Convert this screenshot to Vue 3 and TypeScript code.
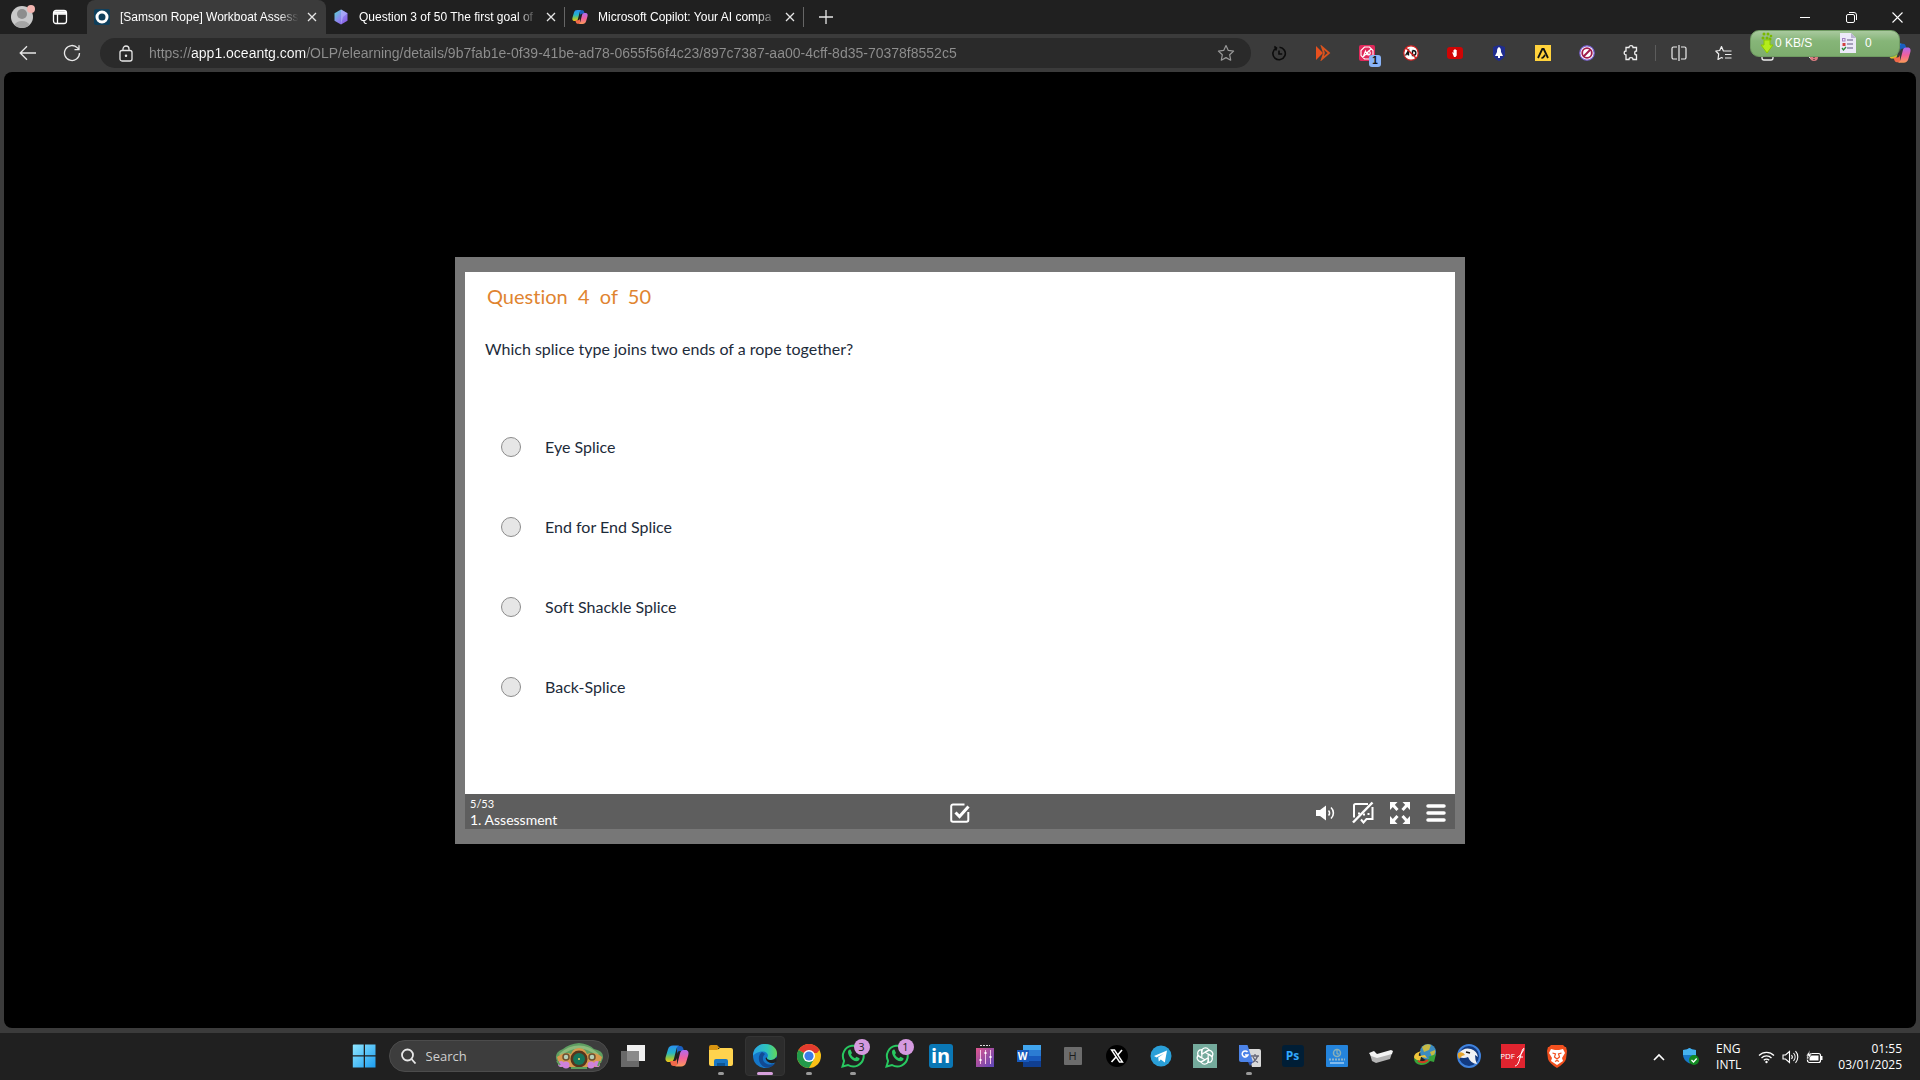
<script setup lang="ts">
import { ref } from 'vue'

const url = ref(
  'https://app1.oceantg.com/OLP/elearning/details/9b7fab1e-0f39-41be-ad78-0655f56f4c23/897c7387-aa00-4cff-8d35-70378f8552c5',
)
const query = ref('')

const tabs = [
  { id: 'samson', title: '[Samson Rope] Workboat Assessm' },
  { id: 'question', title: 'Question 3 of 50 The first goal of' },
  { id: 'copilot', title: 'Microsoft Copilot: Your AI compa' },
]
const activeTab = ref('samson')

const extensions = ['History', 'Speed', 'Ad stopper', 'Ad block', 'Hand', 'Bell', 'Amplify', 'Blocker', 'Extensions']

const answers = ['Eye Splice', 'End for End Splice', 'Soft Shackle Splice', 'Back-Splice']
const picked = ref<string | null>(null)

interface TaskApp {
  name: string
  state?: 'open' | 'active'
  badge?: string
}
const apps: TaskApp[] = [
  { name: 'Task view' },
  { name: 'Copilot' },
  { name: 'File Explorer', state: 'open' },
  { name: 'Edge', state: 'active' },
  { name: 'Chrome', state: 'open' },
  { name: 'WhatsApp', state: 'open', badge: '3' },
  { name: 'WhatsApp Business', badge: '1' },
  { name: 'LinkedIn' },
  { name: 'Mixer' },
  { name: 'Word' },
  { name: 'H' },
  { name: 'X' },
  { name: 'Telegram' },
  { name: 'ChatGPT' },
  { name: 'Translate', state: 'open' },
  { name: 'Photoshop' },
  { name: 'Library' },
  { name: 'Device' },
  { name: 'Download Manager' },
  { name: 'Eagle' },
  { name: 'PDF' },
  { name: 'Brave' },
]
</script>

<template>
  <div class="screen">
    <svg class="defs" width="0" height="0" aria-hidden="true">
      <defs>
        <linearGradient id="cp-a" x1="0" y1="0" x2="0" y2="1">
          <stop offset="0" stop-color="#2a8ff0" />
          <stop offset=".45" stop-color="#25b5c8" />
          <stop offset=".75" stop-color="#8fc743" />
          <stop offset="1" stop-color="#f5c518" />
        </linearGradient>
        <linearGradient id="cp-b" x1="0" y1="0" x2="0" y2="1">
          <stop offset="0" stop-color="#b06af0" />
          <stop offset=".5" stop-color="#f0609c" />
          <stop offset="1" stop-color="#fb9a58" />
        </linearGradient>
        <linearGradient id="win" x1="0" y1="0" x2="1" y2="1">
          <stop offset="0" stop-color="#8fe6ff" />
          <stop offset="1" stop-color="#1b9df0" />
        </linearGradient>
        <linearGradient id="edge-a" x1="0" y1="0" x2="1" y2="0">
          <stop offset="0" stop-color="#2aa5e8" />
          <stop offset=".6" stop-color="#2fc6b8" />
          <stop offset="1" stop-color="#63d857" />
        </linearGradient>
        <linearGradient id="mix" x1="0" y1="0" x2="1" y2="1">
          <stop offset="0" stop-color="#e0568e" />
          <stop offset="1" stop-color="#5a46b8" />
        </linearGradient>
        <linearGradient id="hex" x1="0" y1="0" x2="1" y2="1">
          <stop offset="0" stop-color="#55d8cf" />
          <stop offset=".5" stop-color="#8c88f0" />
          <stop offset="1" stop-color="#8a4fe0" />
        </linearGradient>
        <symbol id="copilot" viewBox="0 0 24 24">
          <path fill="#1a5fc0" d="M12 2h3.500c1.500 0 2.300 1 2.700 2.300L19 7h-4c-2 0-2.500 1-3 3z" />
          <path fill="url(#cp-a)" d="M8 1.500h6.500c-1.800.3-2.500 1.500-3 3.300L9 14.500c-.6 2.300-1.500 3.500-3.700 3.500H3.500C.8 18 0 15.600.7 13L3 5.200C3.800 2.700 5.300 1.500 8 1.500z" />
          <path fill="#f26a4a" d="M12 22H8.500c-1.500 0-2.300-1-2.700-2.300L5 17h4c2 0 2.500-1 3-3z" />
          <path fill="url(#cp-b)" d="M16 22.500H9.500c1.800-.3 2.500-1.500 3-3.300L15 9.500C15.600 7.200 16.500 6 18.700 6h1.800c2.700 0 3.500 2.400 2.800 5L21 18.800c-.8 2.500-2.300 3.700-5 3.700z" />
        </symbol>
      </defs>
    </svg>

    <header class="tabstrip">
      <button class="profile" aria-label="Profile">
        <svg width="26" height="26" viewBox="0 0 26 26">
          <circle cx="13" cy="14" r="11" fill="#c9c9c9" />
          <circle cx="13" cy="11" r="5" fill="#8d8d8d" />
          <path d="M5.500 22a8 6 0 0 1 15 0 11 11 0 0 1-15 0z" fill="#a5a5a5" />
          <circle cx="22" cy="6" r="4" fill="#f3b5b0" />
        </svg>
      </button>
      <button class="workspaces" aria-label="Tab actions">
        <svg width="16" height="16" viewBox="0 0 16 16" fill="none" stroke="#fff" stroke-width="1.300">
          <rect x="1.500" y="1.500" width="13" height="13" rx="2.500" />
          <path d="M1.500 5h13M5.500 5v9.500" /><path d="M2 3.500h12" stroke-width="2.500" />
        </svg>
      </button>
      <nav class="tabs" role="tablist" aria-label="Tabs">
        <div v-for="t in tabs" :key="t.id" class="tab" :class="{ active: t.id === activeTab }">
          <button class="tab-main" role="tab" :aria-selected="t.id === activeTab" @click="activeTab = t.id">
            <svg v-if="t.id === 'samson'" width="16" height="16" viewBox="0 0 16 16">
              <rect width="16" height="16" rx="2" fill="#0f3f5c" />
              <circle cx="8" cy="8" r="5" fill="none" stroke="#fff" stroke-width="3" />
            </svg>
            <svg v-else-if="t.id === 'question'" width="16" height="16" viewBox="0 0 16 16">
              <path d="M8 .5l6.500 3.800v7.400L8 15.500 1.500 11.700V4.300z" fill="url(#hex)" />
              <path d="M8 .5l6.500 3.800L10 8 8 15.500z" fill="#b9b6ff" opacity=".6" />
            </svg>
            <svg v-else width="16" height="16"><use href="#copilot" /></svg>
            <span class="tab-title">{{ t.title }}</span>
          </button>
          <button class="tab-close" :aria-label="'Close ' + t.title">
            <svg width="10" height="10" viewBox="0 0 10 10" stroke="#e6e6e6" stroke-width="1.300"><path d="M1 1l8 8M9 1l-8 8" /></svg>
          </button>
        </div>
      </nav>
      <button class="new-tab" aria-label="New tab">
        <svg width="16" height="16" viewBox="0 0 16 16" stroke="#e6e6e6" stroke-width="1.300"><path d="M8 1v14M1 8h14" /></svg>
      </button>
      <div class="window-controls">
        <button aria-label="Minimise"><svg width="10" height="10" viewBox="0 0 10 10" stroke="#fff"><path d="M0 5.500h10" /></svg></button>
        <button aria-label="Restore">
          <svg width="11" height="11" viewBox="0 0 11 11" fill="none" stroke="#fff"><rect x=".5" y="2.500" width="8" height="8" rx="1.500" /><path d="M3 .5h5a2.500 2.500 0 0 1 2.500 2.500v5" /></svg>
        </button>
        <button aria-label="Close window"><svg width="11" height="11" viewBox="0 0 11 11" stroke="#fff" stroke-width="1.100"><path d="M.5.5l10 10M10.500.5l-10 10" /></svg></button>
      </div>
    </header>

    <div class="toolbar">
      <button class="nav-button" aria-label="Back">
        <svg width="18" height="16" viewBox="0 0 18 16" fill="none" stroke="#e8e8e8" stroke-width="1.300"><path d="M17 8H1.500M8 1.200L1.200 8 8 14.800" /></svg>
      </button>
      <button class="nav-button" aria-label="Refresh">
        <svg width="18" height="18" viewBox="0 0 18 18" fill="none" stroke="#e8e8e8" stroke-width="1.300"><path d="M16.500 9A7.500 7.500 0 1 1 14.500 3.900L16 5.500M16 1.200v4.500h-4.500" /></svg>
      </button>
      <div class="address">
        <button class="lock" aria-label="Site information">
          <svg width="14" height="17" viewBox="0 0 14 17" fill="none" stroke="#e8e8e8" stroke-width="1.300"><rect x="1" y="5.500" width="12" height="10.500" rx="2" /><path d="M4 5.500V4a3 3 0 0 1 6 0v1.500" /><circle cx="7" cy="10.800" r=".6" fill="#e8e8e8" /></svg>
        </button>
        <input v-model="url" class="url" type="text" aria-label="Address" spellcheck="false" />
        <button class="star" aria-label="Favourite">
          <svg width="18" height="18" viewBox="0 0 18 18" fill="none" stroke="#999" stroke-width="1.200" stroke-linejoin="round"><path d="M9 1.500l2.300 4.900 5.300.7-3.900 3.700 1 5.400L9 13.600l-4.700 2.600 1-5.400L1.400 7.100l5.300-.7z" /></svg>
        </button>
      </div>
      <div class="extensions">
        <button v-for="(e, i) in extensions" :key="e" class="tool" :aria-label="e">
          <svg v-if="i === 0" width="16" height="16" viewBox="0 0 16 16" fill="none" stroke="#0c0c0c" stroke-width="1.600"><path d="M5.200 3A6.200 6.200 0 1 0 8.500 2.300M3.300 1.500L5.500 3l-.8 2.600" /><path d="M8 5.500V9h3.200" /></svg>
          <svg v-else-if="i === 1" width="16" height="16" viewBox="0 0 16 16"><path d="M1 1l7 7-7 7z" fill="#e8501e" /><path d="M7 2l7 6-7 6 2-6z" fill="none" stroke="#d9531e" stroke-width="1.800" /></svg>
          <span v-else-if="i === 2" class="badge-holder">
            <svg width="16" height="16" viewBox="0 0 16 16"><rect width="16" height="16" rx="2" fill="#e0285a" /><path d="M5.500 2h5L14 5.500v5L10.500 14h-5L2 10.500v-5zM3.500 12.500l9-9M4.500 11l2-5 1.500 4M9 6v4c3 0 3-4 0-4" fill="none" stroke="#fff" stroke-width="1.100" /></svg>
            <b class="count">1</b>
          </span>
          <svg v-else-if="i === 3" width="16" height="16" viewBox="0 0 16 16"><circle cx="8" cy="8" r="7.200" fill="#fff" stroke="#d42020" stroke-width="1.200" /><path d="M2.500 10.500L5.500 5.500V10.500M4 9h2M9.500 5.500v5c4.500 0 4.500-5 0-5" fill="none" stroke="#111" stroke-width="1.400" /><path d="M3 3l10 10" stroke="#d42020" stroke-width="1.500" /></svg>
          <svg v-else-if="i === 4" width="16" height="16" viewBox="0 0 16 16"><rect x="0" y="2" width="16" height="12" rx="3" fill="#d00505" /><path d="M5 7l1.500 1V5h1V4h1v1h1.200v5.500L8.500 12H7z" fill="#fff" /></svg>
          <svg v-else-if="i === 5" width="16" height="16" viewBox="0 0 16 16"><path d="M8 0l6 2v7c0 3-3 5.500-6 7-3-1.500-6-4-6-7V2z" fill="#1f2c8f" /><path d="M8 2c2 1 2 3 2 5l2 4H4l2-4c0-2 0-4 2-5zM7 11h2v2H7z" fill="#fff" /></svg>
          <svg v-else-if="i === 6" width="16" height="16" viewBox="0 0 16 16"><rect width="16" height="16" fill="#ffd23c" /><path d="M3 13L7.300 4h1.400L13 13M6.500 13c2.500 0 2.500-2 3.500-3" fill="none" stroke="#111" stroke-width="1.800" /></svg>
          <svg v-else-if="i === 7" width="16" height="16" viewBox="0 0 16 16"><circle cx="8" cy="8" r="7.200" fill="#fff" stroke="#7d63d8" stroke-width="1.200" /><circle cx="8" cy="8" r="4.800" fill="#fff" stroke="#a01c4c" stroke-width="1.800" /><path d="M4.500 11.500l7-7" stroke="#a01c4c" stroke-width="2" /></svg>
          <svg v-else width="16" height="16" viewBox="0 0 16 16" fill="none" stroke="#eee" stroke-width="1.300"><path d="M3 2.500h3a2 1.800 0 1 1 4 0h3.500V6a1.800 2 0 1 0 0 4v4.500H10a2 1.800 0 1 0-4 0H3V10a1.800 2 0 1 1 0-4z" /></svg>
        </button>
        <span class="divider"></span>
        <button class="tool" aria-label="Split screen">
          <svg width="16" height="16" viewBox="0 0 16 16" fill="none" stroke="#eee" stroke-width="1.200"><path d="M8 0v16M6 2H2.500A1.500 1.500 0 0 0 1 3.500v9A1.500 1.500 0 0 0 2.500 14H6M10 2h3.500A1.500 1.500 0 0 1 15 3.500v9a1.500 1.500 0 0 1-1.500 1.500H10" /></svg>
        </button>
        <button class="tool" aria-label="Favourites">
          <svg width="17" height="17" viewBox="0 0 17 17" fill="none" stroke="#eee" stroke-width="1.200" stroke-linejoin="round"><path d="M10 6L8.300 5.800 6.500 1.500 4.700 5.500.8 6l2.900 3L3 14.500l3.500-2 1.500.8M10 6h6.500M10 9.500h6.500M10 13h6.500" /></svg>
        </button>
        <button class="tool" aria-label="Collections">
          <svg width="16" height="16" viewBox="0 0 16 16" fill="none" stroke="#eee" stroke-width="1.300"><rect x="3" y="3" width="11" height="12" rx="2" /><path d="M8.500 7v5" /></svg>
        </button>
        <button class="tool" aria-label="Browser essentials">
          <svg width="16" height="16" viewBox="0 0 16 16"><path d="M2 8l6 6" stroke="#ddd" /><circle cx="11" cy="12" r="4" fill="#d97c80" /><path d="M11 9v4M11 14v1" stroke="#222" /></svg>
        </button>
      </div>
      <button class="sidebar-copilot" aria-label="Copilot">
        <svg width="22" height="22"><use href="#copilot" /></svg>
      </button>
      <aside class="net-widget" aria-label="Download speed">
        <svg width="14" height="24" viewBox="0 0 14 24"><g fill="#7ab800"><circle cx="4" cy="3" r="1.500" /><circle cx="8" cy="3" r="1.500" /><circle cx="11" cy="5" r="1.300" /><circle cx="3" cy="7" r="1.500" /><circle cx="7" cy="7" r="1.500" /><circle cx="10" cy="8" r="1.500" /></g><path d="M4 9h6v5h3l-6 8-6-8h3z" fill="#b4ec1c" stroke="#8ac800" /></svg>
        <span class="rate">0 KB/S</span>
        <svg class="sheet" width="16" height="20" viewBox="0 0 16 20"><path d="M0 0h11l5 5v15H0z" fill="#ece9f8" /><path d="M11 0v5h5z" fill="#b9b4d0" /><path d="M7 7h6M7 11h6M7 15h6" stroke="#8d88a8" stroke-width="1.300" /><g fill="none"><rect x="2.500" y="5.500" width="2.500" height="2.500" stroke="#a080c0" /><path d="M2.500 10h3v3h-3z" fill="#d04040" /><path d="M2 15l1.500 2L6 14" stroke="#2c8c3c" stroke-width="1.300" /></g></svg>
        <span>0</span>
      </aside>
    </div>

    <main class="viewport">
      <section class="player">
        <form class="slide" @submit.prevent>
          <h1>Question&nbsp; 4&nbsp; of&nbsp; 50</h1>
          <fieldset>
            <legend>Which splice type joins two ends of a rope together?</legend>
            <label v-for="a in answers" :key="a" class="answer">
              <input v-model="picked" type="radio" name="answer" :value="a" />
              <span>{{ a }}</span>
            </label>
          </fieldset>
        </form>
        <footer class="controls">
          <div class="progress">
            <small>5/53</small>
            <span>1. Assessment</span>
          </div>
          <button aria-label="Submit answer">
            <svg width="20" height="20" viewBox="0 0 20 20" fill="none" stroke="#fff" stroke-width="2"><path d="M14.500 1.500H3A1.800 1.800 0 0 0 1.200 3.300V17A1.800 1.800 0 0 0 3 18.800h13.500a1.800 1.800 0 0 0 1.800-1.800V9" /><path d="M5.500 9.500l4 4 9-10" stroke-width="3" /></svg>
          </button>
          <div class="right-controls">
            <button aria-label="Volume">
              <svg width="20" height="16" viewBox="0 0 20 16" fill="none" stroke="#fff" stroke-width="1.600"><path d="M0 5h4l6-4.500v15L4 11H0z" fill="#fff" stroke="none" /><path d="M12.500 5.500a3.500 3.500 0 0 1 0 5M15 2.500a7.500 7.500 0 0 1 0 11" /></svg>
            </button>
            <button aria-label="Captions off">
              <svg width="22" height="23" viewBox="0 0 22 23" fill="none" stroke="#fff" stroke-width="2"><path d="M2 16.500v-12A1.500 1.500 0 0 1 3.500 3H16M20.500 6v12h-6l-3 3.500L9 18.500" /><path d="M1 21.500L20.500 1.500" stroke-width="2.500" /><path d="M6 12.500h2M11 13.500h2M15.500 13h2" /></svg>
            </button>
            <button aria-label="Full screen">
              <svg width="20" height="22" viewBox="0 0 20 22" fill="#fff" stroke="#fff" stroke-width="3"><path d="M3 3l4.500 5M17 3l-4.500 5M3 19l4.500-5M17 19l-4.500-5" /><path d="M0 0h7.500L0 8zM20 0h-7.500l7.500 8zM0 22h7.500l-7.500-8zM20 22h-7.500l7.500-8z" stroke="none" /></svg>
            </button>
            <button aria-label="Menu">
              <svg width="20" height="18" viewBox="0 0 20 18" stroke="#fff" stroke-width="3.500" stroke-linecap="round"><path d="M2 2h16M2 9h16M2 16h16" /></svg>
            </button>
          </div>
        </footer>
      </section>
    </main>

    <footer class="taskbar">
      <div class="dock">
        <button class="app" aria-label="Start">
          <svg width="24" height="24" viewBox="0 0 24 24" fill="url(#win)"><path d="M1.500.5H11.700V11.200H.8V1zM13 .5h10.500v10.700H13zM.8 12.500h10.900v11H.8zM13 12.500h10.500v11H13z" /></svg>
        </button>
        <label class="search">
          <svg width="16" height="16" viewBox="0 0 16 16" fill="none" stroke="#e8e8e8" stroke-width="1.800"><circle cx="6.500" cy="7" r="5.500" /><path d="M10.500 11l4 4.500" /></svg>
          <input v-model="query" type="text" placeholder="Search" aria-label="Search" />
          <svg width="50" height="26" viewBox="0 0 50 26">
            <path d="M3 18Q-1 10 9 6q6-5 16-6 10 1 15 6 10 2 9 9l-2 5z" fill="#5f9f62" />
            <path d="M6 12Q15 4 25 4t19 8" fill="none" stroke="#8dba7c" stroke-width="3" />
            <path d="M3 14q8-6 14-3 2-6 8-6t8 6q8-3 15 3l-3 10H6z" fill="#d99a4e" />
            <g fill="#b6d0b8" stroke="#6b5230" stroke-width="1.500"><circle cx="12" cy="14" r="3" /><circle cx="38" cy="14" r="3" /></g>
            <circle cx="25" cy="16" r="8.500" fill="#58351c" /><circle cx="25" cy="16" r="6" fill="#16755a" /><circle cx="25" cy="16" r="1" fill="#f1d36a" />
            <g fill="#cf82dc"><circle cx="7" cy="21" r="3" /><circle cx="12" cy="22" r="3.500" /><circle cx="37" cy="22" r="3.500" /><circle cx="43" cy="21" r="3" /></g>
            <path d="M17 25h16M3 18l3 4M46 18l-2 5" stroke="#5da05c" stroke-width="2" />
          </svg>
        </label>
        <button v-for="a in apps" :key="a.name" class="app" :class="a.state" :aria-label="a.name">
          <svg v-if="a.name === 'Task view'" width="24" height="24" viewBox="0 0 24 24"><path d="M6 1h18v16H6z" fill="#f0f0f0" /><path d="M0 7h18v16H0z" fill="#777" opacity=".85" /></svg>
          <svg v-else-if="a.name === 'Copilot'" width="24" height="24"><use href="#copilot" /></svg>
          <svg v-else-if="a.name === 'File Explorer'" width="24" height="24" viewBox="0 0 24 24"><path d="M0 3q0-2 2-2h6l3 3h-2v5H0z" fill="#d89410" /><path d="M0 6h8l3-2h11q2 0 2 2v14q0 2-2 2H2q-2 0-2-2z" fill="#ffd34e" /><path d="M5 22v-5q0-2 2-2h10q2 0 2 2v5z" fill="#1976c4" /><path d="M8 19h8v3H8z" fill="#0e5594" /></svg>
          <svg v-else-if="a.name === 'Edge'" width="24" height="24" viewBox="0 0 24 24"><circle cx="12" cy="12" r="12" fill="#1577c9" /><path d="M0 12C0 5 5 0 12 0c8 0 12 5 12 9.500 0 4-3 6.500-6.500 6.500-2.500 0-4-1-3.200-2.500C16 11 14 7.500 9.500 7.500 5 7.500 1 10 0 12z" fill="url(#edge-a)" /><path d="M9 8c-3 2-4 6-2.500 10 1.500 3.500 5 6 9 5.500 3-.5 5-2 6.500-4-5 2.500-11 .5-12-4-.5-3 1-4.500 2-5.500z" fill="#114a94" /><path d="M23 18c-4 2.500-9.500 1-10.500-4l1.500-.5c-.5 2 2 2.500 4 2.500 2.500 0 4-1 5.500-3 .5 2 .5 3-.5 5z" fill="#202020" /></svg>
          <svg v-else-if="a.name === 'Chrome'" width="24" height="24" viewBox="0 0 24 24"><circle cx="12" cy="12" r="12" fill="#fbc116" /><path d="M12 12L1.600 6A12 12 0 0 1 22.400 6z" fill="#e33b2e" /><path d="M1.600 6A12 12 0 0 0 12 24l5-9-5-3z" fill="#229a4a" /><path d="M12 6h10.400L20 9h-4z" fill="#e33b2e" /><circle cx="12" cy="12" r="6" fill="#fff" /><circle cx="12" cy="12" r="4.600" fill="#3b7de8" /></svg>
          <span v-else-if="a.badge" class="badge-holder">
            <svg width="24" height="24" viewBox="0 0 24 24" fill="none"><path d="M1.500 22.500l1.600-5.600A10.400 10.400 0 1 1 7 21z" stroke="#28c860" stroke-width="2" /><path d="M7 8c0-2 2-3 2.700-2l1.300 3-1 1.500c1 2 2 3 4 3.700l1.500-1.500 3 1.500c.5 1-1 3-3 3C11 17 7 12 7 8z" fill="#28c860" /></svg>
            <b class="alert">{{ a.badge }}</b>
          </span>
          <span v-else-if="a.name === 'LinkedIn'" class="tile linkedin">in</span>
          <svg v-else-if="a.name === 'Mixer'" width="20" height="24" viewBox="0 0 20 24"><path d="M1 4h18v19H1z" fill="url(#mix)" /><path d="M5 1.500h10" stroke="#ddd" stroke-dasharray="2 1" /><path d="M5.500 6v14M10.500 6v14M15.500 6v14" stroke="#f3c4e6" /><path d="M4.500 16h2M9.500 9h2M14.500 13h2" stroke="#fff" stroke-width="2" /></svg>
          <span v-else-if="a.name === 'Word'" class="word"><b>W</b></span>
          <span v-else-if="a.name === 'H'" class="tile letter">H</span>
          <svg v-else-if="a.name === 'X'" width="22" height="22" viewBox="0 0 22 22"><circle cx="11" cy="11" r="11" /><path d="M5.500 5h3l8 12h-3z" fill="none" stroke="#fff" stroke-width="1.400" /><path d="M16 5l-4.300 5M10 12l-4.500 5" stroke="#fff" stroke-width="1.600" /></svg>
          <svg v-else-if="a.name === 'Telegram'" width="22" height="22" viewBox="0 0 22 22"><circle cx="11" cy="11" r="10.500" fill="#2a9fd8" /><path d="M4 11l13-5.500-2.200 12-4-3-2 2-.6-4L14 8.500l-7.500 4z" fill="#fff" /></svg>
          <svg v-else-if="a.name === 'ChatGPT'" width="24" height="24" viewBox="0 0 24 24"><path d="M0 0h24v24H0z" fill="#74aa9c" /><g fill="none" stroke="#fff" stroke-width="1.200"><path v-for="n in 6" :key="n" :transform="`rotate(${n * 60} 12 12)`" d="M8.800 13.800V7.500A3.700 3.700 0 0 1 15.600 5.500M12 8.200L16.500 5.600" /></g></svg>
          <svg v-else-if="a.name === 'Translate'" width="24" height="24" viewBox="0 0 24 24"><path d="M10 5h12q2 0 2 2v15q0 1-1 1H15z" fill="#d9d9d9" /><path d="M14 12h8M18 10v2M20.500 12q-1 4-5 6.500M16 13q2 4 5 5.500" stroke="#667" fill="none" stroke-width="1.300" /><path d="M2 1h8.500L16 18H4q-2 0-2-2z" fill="#4c83e8" /><path d="M11 18h5l-3 4z" fill="#3254b0" /><path d="M10.500 8A3 3 0 1 0 11 11H8" fill="none" stroke="#fff" stroke-width="1.500" /></svg>
          <span v-else-if="a.name === 'Photoshop'" class="tile photoshop">Ps</span>
          <svg v-else-if="a.name === 'Library'" width="22" height="22" viewBox="0 0 22 22"><rect width="22" height="22" rx="1" fill="#2484dc" /><circle cx="11" cy="8" r="3.500" fill="none" stroke="#8ab0b8" stroke-width="1.500" /><path d="M11 5v4h2" stroke="#9fb8a8" fill="none" /><path d="M3 14.500h16" stroke="#8fb4c8" stroke-width="2" stroke-dasharray="2 1" /><path d="M4 18h14" stroke="#9fccf5" stroke-width="1.500" /></svg>
          <svg v-else-if="a.name === 'Device'" width="24" height="16" viewBox="0 0 24 16"><path d="M1 6l2 7 4 2 14-4 2-6-1-2-14 4z" fill="#b5b5b5" /><path d="M0 5l5-2 3 3 14-4 2 1-1 3-15 4-6-2z" fill="#f4f4f4" /></svg>
          <svg v-else-if="a.name === 'Download Manager'" width="24" height="24" viewBox="0 0 24 24"><circle cx="15" cy="8" r="8" fill="#3d8cc0" /><path d="M9 3q4-4 9-2l-2 5-5 2zM17 8l5-2q1 4-3 7z" fill="#c5b945" /><path d="M8 7Q1 9 1 13t6 4l1-4 6 1-2-3-6 1q-1-2 2-5z" fill="#f0c53a" /><path d="M1 14q0 6 7 7 6 0 9-4l4 1 2-8-8 3 2 1q-5 4-9 3-4 0-7-3z" fill="#36a33a" /><path d="M5 17q5 3 10-1" stroke="#d43c22" stroke-width="2" fill="none" /></svg>
          <svg v-else-if="a.name === 'Eagle'" width="24" height="24" viewBox="0 0 24 24"><circle cx="12" cy="12" r="11" fill="#123a80" stroke="#3f82dd" stroke-width="2" /><path d="M2 9q5-6 12-4 6 2 7 8l-3-2q0 5 2 9-6 0-9-7-4 2-9 0z" fill="#f0f2f5" /><path d="M1 9q5-2 7 2l-3 1-3 3q-2-3-1-6z" fill="#e4a52e" /><path d="M9 8l4 1" stroke="#111" stroke-width="1.500" /></svg>
          <span v-else-if="a.name === 'PDF'" class="tile pdf">PDF<svg width="10" height="22" viewBox="0 0 10 22" fill="none" stroke="#fff"><path d="M0 21q3 0 5-8t3-9q2-2 0 2T2 13m2-1h4" /></svg></span>
          <svg v-else width="22" height="24" viewBox="0 0 22 24"><path d="M5 1h12l2 2h1l1 4-1 8q-1 4-9 9-8-5-9-9L1 7l1-4h1z" fill="#f2501e" /><path d="M5 5l4 1h4l4-1 2 4-3 5 1 3-6 4-6-4 1-3-3-5z" fill="#fff" /><path d="M6.500 9l3 1-1 3 2.500 2 2.500-2-1-3 3-1M9 17.500l2-1 2 1" fill="none" stroke="#f2501e" stroke-width="1.200" /></svg>
        </button>
      </div>
      <div class="tray">
        <button aria-label="Show hidden icons"><svg width="12" height="8" viewBox="0 0 12 8" fill="none" stroke="#fff" stroke-width="1.600"><path d="M1 7l5-5 5 5" /></svg></button>
        <button class="shield" aria-label="Security">
          <svg width="17" height="17" viewBox="0 0 17 17"><path d="M7.500 0Q10 2 14 2v5q0 5-6.500 8.500Q1 12 1 7V2q4 0 6.500-2z" fill="#1878c8" /><path d="M7.500 0Q10 2 14 2v5H1V2q4 0 6.500-2z" fill="#45b2ef" /><circle cx="12" cy="12" r="5" fill="#128a22" /><path d="M9.500 12l2 2 3.200-3.500" stroke="#fff" stroke-width="1.300" fill="none" /></svg>
        </button>
        <button class="lang">ENG<br />INTL</button>
        <button class="status" aria-label="Network, sound and battery">
          <svg width="17" height="14" viewBox="0 0 17 14" fill="none" stroke="#fff" stroke-width="1.300"><path d="M1 5.500a10.500 10.500 0 0 1 15 0M3.500 8a7 7 0 0 1 10 0M5.800 10.300a3.800 3.800 0 0 1 5.400 0" /><circle cx="8.500" cy="12" r="1.200" fill="#fff" stroke="none" /></svg>
          <svg width="17" height="14" viewBox="0 0 17 14" fill="none" stroke="#fff" stroke-width="1.100"><path d="M1 5h2.500L7.500 1.500v11L3.500 9H1zM9.500 5a3 3 0 0 1 0 4M11.500 3a6 6 0 0 1 0 8M13.500 1.200a8.500 8.500 0 0 1 0 11.600" /></svg>
          <svg width="17" height="14" viewBox="0 0 17 14"><rect x="1.500" y="3.500" width="13" height="9" rx="2" fill="none" stroke="#fff" stroke-width="1.200" /><path d="M3.500 5.500h9v5h-9zM15 6h1.500v4H15z" fill="#fff" /><path d="M4 0L0 6h2.500L1.500 10l4.500-6H3.500z" fill="#fff" stroke="#202020" stroke-width=".6" /></svg>
        </button>
        <button class="clock">01:55<br />03/01/2025</button>
      </div>
    </footer>
  </div>
</template>

<style>
body {
  margin: 0;
  background: #3b3b3b;
}
</style>

<style scoped>
.screen {
  display: flex;
  flex-direction: column;
  min-height: 100vh;
  background: #3b3b3b;
  color: #fff;
  font: 12px/16px "Liberation Sans", Arial, sans-serif;
}
.screen *,
.screen *::before {
  box-sizing: border-box;
}
.defs {
  position: absolute;
}
button {
  display: flex;
  align-items: center;
  justify-content: center;
  margin: 0;
  padding: 0;
  border: 0;
  background: none;
  color: inherit;
  font: inherit;
}
svg {
  display: block;
  flex: none;
}
input {
  margin: 0;
}

/* Tab strip */
.tabstrip {
  display: flex;
  height: 34px;
  background: #202020;
}
.profile {
  width: 44px;
  padding-bottom: 2px;
}
.workspaces {
  width: 32px;
}
.tabs {
  display: flex;
  margin-left: 11px;
}
.tab {
  display: flex;
  align-items: center;
  width: 239px;
  padding: 8px 0;
  background: linear-gradient(#666, #666) right center / 1px 20px no-repeat;
}
.tab.active {
  border-radius: 8px 8px 0 0;
  background: #3b3b3b;
}
.tab-main {
  flex: 1;
  justify-content: flex-start;
  gap: 10px;
  min-width: 0;
  padding-left: 7px;
}
.tab-title {
  flex: none;
  width: 184px;
  text-align: left;
  white-space: nowrap;
  mask-image: linear-gradient(to right, #000 86%, transparent 97%);
}
.tab-close {
  width: 28px;
  height: 18px;
}
.new-tab {
  width: 44px;
}
.window-controls {
  display: flex;
  margin-left: auto;
}
.window-controls button {
  width: 46px;
}

/* Toolbar */
.toolbar {
  position: relative;
  display: flex;
  align-items: center;
  height: 38px;
  padding-left: 6px;
}
.nav-button {
  width: 44px;
  height: 30px;
}
.address {
  display: flex;
  flex: 1;
  align-items: center;
  height: 30px;
  min-width: 0;
  margin: 0 6px;
  padding: 0 16px 0 19px;
  border-radius: 15px;
  background: #2a2a2a;
}
.url {
  flex: 1;
  min-width: 0;
  margin-left: 16px;
  padding: 0;
  border: 0;
  outline: 0;
  background: linear-gradient(to right, #8f8f8f 42px, #fff 42px, #fff 157px, #8f8f8f 157px);
  background-clip: text;
  color: #8f8f8f;
  font: 14px/20px "Liberation Sans", Arial, sans-serif;
  -webkit-text-fill-color: transparent;
}
.extensions {
  display: flex;
  align-items: center;
}
.tool {
  width: 44px;
  height: 30px;
}
.divider {
  width: 1px;
  height: 16px;
  margin: 0 1px 0 2px;
  background: #5c5c5c;
}
.badge-holder {
  position: relative;
  display: block;
}
.count {
  position: absolute;
  top: 10px;
  left: 10px;
  width: 12px;
  height: 12px;
  border-radius: 3px;
  background: #8ab4f8;
  color: #111;
  font-size: 10px;
  line-height: 12px;
  text-align: center;
}
.sidebar-copilot {
  width: 40px;
  height: 30px;
  margin-left: 47px;
}
.net-widget {
  position: absolute;
  top: -4px;
  right: 20px;
  display: flex;
  align-items: center;
  width: 150px;
  height: 27px;
  padding: 0 0 2px 9px;
  border: 1px solid #6f9a62;
  border-radius: 9px;
  background: linear-gradient(#a9c99e, #86b578 40%, #7dad6e);
}
.rate {
  width: 66px;
  padding-left: 1px;
}
.sheet {
  margin-right: 9px;
}

/* Course player */
.viewport {
  display: flex;
  flex: 1;
  align-items: center;
  justify-content: center;
  margin: 0 4px;
  padding: 16px;
  border-radius: 8px;
  background: #000;
}
.player {
  width: 100%;
  max-width: 1010px;
  padding: 15px 10px;
  background: #777;
  font: 16px/24px Lato, sans-serif;
  font-variant-ligatures: none;
}
.slide {
  min-height: 522px;
  padding: 12px 20px 66px;
  background: #fff;
  color: #1d2b3a;
}
h1 {
  margin: 0;
  padding-left: 2px;
  color: #e08430;
  font-size: 20px;
  font-weight: 400;
  line-height: 24px;
}
fieldset {
  margin: 29px 0 0;
  padding: 0;
  border: 0;
}
legend {
  margin-bottom: 46px;
  padding: 0;
}
.answer {
  display: flex;
  align-items: center;
  gap: 24px;
  height: 80px;
  padding-left: 16px;
}
.answer input {
  width: 20px;
  height: 20px;
  border: 1px solid #8c8c8c;
  border-radius: 50%;
  appearance: none;
  background: #e6e6e6;
}
.answer input:checked {
  background: radial-gradient(#444 5px, #e6e6e6 6px);
}
.controls {
  display: grid;
  grid-template-columns: 1fr auto 1fr;
  align-items: center;
  height: 35px;
  padding: 2px 5px 0;
  background: #5e5e5e;
}
.progress {
  display: flex;
  flex-direction: column;
  padding-bottom: 2px;
  font-size: 14px;
  line-height: 16px;
}
.progress small {
  font-size: 11px;
}
.right-controls {
  display: flex;
  align-items: center;
  justify-content: flex-end;
  gap: 16px;
  padding-right: 4px;
}

/* Taskbar */
.taskbar {
  display: grid;
  grid-template-columns: 1fr auto 1fr;
  align-items: center;
  height: 47px;
  margin-top: 5px;
  background: #202020;
  font: 12px/16px "Open Sans", sans-serif;
}
.dock {
  display: flex;
  grid-column: 2;
  align-items: center;
  padding-bottom: 2px;
}
.app {
  position: relative;
  width: 44px;
  height: 40px;
}
.app.active::before {
  content: "";
  position: absolute;
  inset: 0 2px;
  border: 1px solid #343434;
  border-radius: 4px;
  background: #2c2c2c;
}
.app > * {
  position: relative;
}
.app.open::after,
.app.active::after {
  content: "";
  position: absolute;
  bottom: 1px;
  left: 19px;
  width: 6px;
  height: 3px;
  border-radius: 2px;
  background: #999;
}
.app.active::after {
  left: 14px;
  width: 16px;
  background: #d6a0dc;
}
.search {
  display: flex;
  align-items: center;
  width: 220px;
  height: 32px;
  margin: 0 2px 0 3px;
  padding: 0 4px 0 11px;
  border: 1px solid #4c4c4c;
  border-radius: 16px;
  background: #3d3d3d;
}
.search input {
  flex: 1;
  min-width: 0;
  margin-left: 9px;
  padding: 0;
  border: 0;
  outline: 0;
  background: none;
  color: #fff;
  font: 13px/20px "Open Sans", sans-serif;
}
.search input::placeholder {
  color: #cfcfcf;
}
.alert {
  position: absolute;
  top: -5px;
  left: 13px;
  width: 16px;
  height: 16px;
  border-radius: 8px;
  background: #d59ae0;
  color: #222;
  font-size: 11px;
  font-weight: 400;
  line-height: 16px;
  text-align: center;
}
.tile {
  display: flex;
  align-items: center;
  justify-content: center;
  width: 22px;
  height: 22px;
  border-radius: 3px;
}
.linkedin {
  width: 24px;
  height: 24px;
  background: #0a77b5;
  font-size: 20px;
  font-weight: 700;
  line-height: 20px;
}
.letter {
  width: 18px;
  height: 18px;
  border-radius: 1px;
  background: #6c6c6c;
  color: #1c1c1c;
  font-size: 11px;
}
.photoshop {
  background: #001e36;
  color: #31a8ff;
  font-weight: 700;
}
.pdf {
  width: 24px;
  height: 24px;
  border-radius: 0;
  background: #e0242f;
  font-size: 8px;
}
.word {
  display: flex;
  align-items: center;
  width: 24px;
  height: 22px;
  background: linear-gradient(#41a5ee 25%, #2b7cd3 25% 50%, #185abd 50% 75%, #103f91 75%) right / 18px 22px no-repeat;
}
.word b {
  width: 12px;
  height: 12px;
  background: #185abd;
  font-size: 10px;
  line-height: 12px;
  text-align: center;
}
.tray {
  display: flex;
  align-items: center;
  justify-content: flex-end;
  padding-right: 18px;
}
.shield {
  margin: 0 17px 0 17px;
}
.lang {
  text-align: left;
}
.status {
  gap: 7px;
  margin: 0 15px 0 17px;
}
.clock {
  text-align: right;
}
</style>
